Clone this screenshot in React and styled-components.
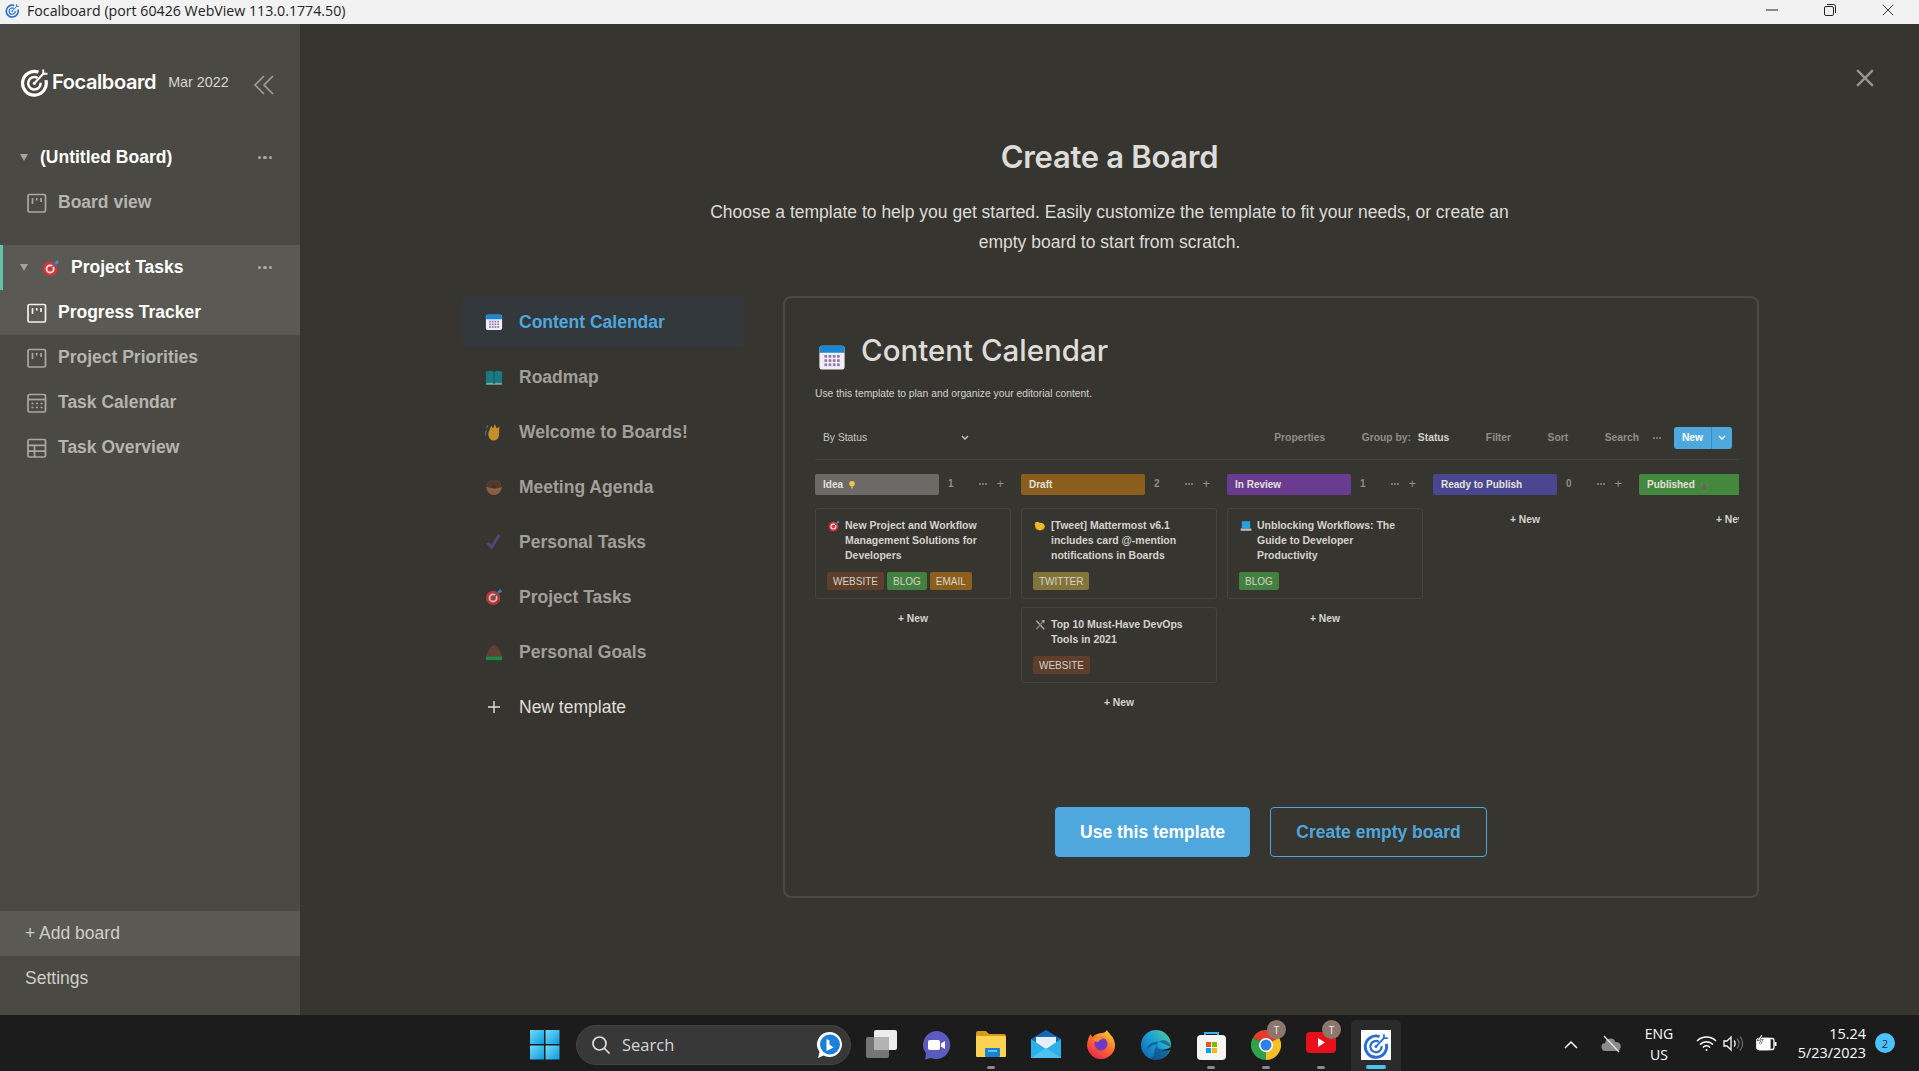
import styled, { createGlobalStyle } from 'styled-components'

const GlobalStyle = createGlobalStyle`
    html, body {
        margin: 0;
        padding: 0;
        background: #37352f;
        font-family: "Liberation Sans", Arial, sans-serif;
    }
    * { box-sizing: border-box; }
`

const Page = styled.div`
    width: 1919px;
    height: 1071px;
    display: flex;
    flex-direction: column;
    overflow: hidden;
`

/* window title bar */
const TitleBar = styled.div`
    height: 24px;
    flex: none;
    display: flex;
    align-items: center;
    background: #f2f2f2;
    padding: 0 0 4px 5px;
    color: #222;
    font-family: "Open Sans", sans-serif;
    font-size: 14.2px;
`
const TitleText = styled.span`
    margin-left: 7px;
    white-space: nowrap;
`
const WindowButtons = styled.div`
    margin-left: auto;
    display: flex;
    padding-right: 2px;
`
const WindowButton = styled.div`
    width: 58px;
    height: 20px;
    display: flex;
    align-items: center;
    justify-content: center;
`

const Body = styled.div`
    flex: 1;
    display: flex;
    min-height: 0;
`

/* sidebar */
const Sidebar = styled.aside`
    width: 300px;
    flex: none;
    display: flex;
    flex-direction: column;
    background: #4a4943;
    color: #fff;
`
const SideHeader = styled.div`
    height: 111px;
    flex: none;
    padding: 43px 0 0 20px;
    display: flex;
    align-items: flex-start;
`
const Logo = styled.div`
    height: 30px;
    display: flex;
    align-items: center;
`
const LogoText = styled.span`
    margin-left: 2px;
    font-family: Inter, sans-serif;
    font-size: 20px;
    font-weight: 600;
    letter-spacing: -0.4px;
`
const Version = styled.span`
    margin-left: 12px;
    font-size: 14.3px;
    color: #d8d7d3;
`
const Collapse = styled.div`
    margin-left: 24px;
    height: 30px;
    display: flex;
    align-items: center;
    padding-top: 5px;
`
const Group = styled.div`
    margin-bottom: 20px;
`
const SideRow = styled.div`
    height: 45px;
    display: flex;
    align-items: center;
    position: relative;
    padding-left: ${p => p.$indent}px;
    background: ${p => (p.$active ? '#5a5953' : 'transparent')};
    color: ${p => (p.$bright ? '#ffffff' : '#b5b4b0')};
    font-size: 17.5px;
    font-weight: 700;
`
const ActiveMark = styled.span`
    position: absolute;
    left: 0;
    top: 0;
    bottom: 0;
    width: 3px;
    background: #5fc4a8;
`
const Caret = styled.span`
    width: 0;
    height: 0;
    margin-right: 12px;
    border-left: 4.5px solid transparent;
    border-right: 4.5px solid transparent;
    border-top: 7px solid #a5a39e;
`
const RowIcon = styled.span`
    display: flex;
    margin-right: ${p => p.$gap || 11}px;
    margin-left: ${p => p.$left || 0}px;
`
const More = styled.span`
    position: absolute;
    right: 28px;
    top: 50%;
    margin-top: -2px;
    display: flex;
    gap: 2px;
    & i {
        width: 3.5px;
        height: 3.5px;
        border-radius: 50%;
        background: #aaa9a4;
    }
`
const SideFooter = styled.div`
    margin-top: auto;
    padding-bottom: 14px;
`
const FootRow = styled.div`
    height: 45px;
    display: flex;
    align-items: center;
    padding-left: 25px;
    font-size: 17.5px;
    color: #cfcec9;
    background: ${p => (p.$active ? '#5a5953' : 'transparent')};
`

/* dialog */
const Main = styled.main`
    flex: 1;
    position: relative;
    background: #37352f;
    padding-top: 113px;
`
const CloseX = styled.div`
    position: absolute;
    top: 45px;
    right: 45px;
    display: flex;
`
const Heading = styled.h1`
    margin: 0;
    height: 40px;
    line-height: 40px;
    text-align: center;
    font-family: Inter, sans-serif;
    font-size: 31px;
    font-weight: 600;
    color: #dddcd9;
    letter-spacing: -0.3px;
`
const Intro = styled.p`
    width: 830px;
    margin: 20px auto 0;
    text-align: center;
    font-size: 17.5px;
    line-height: 30px;
    color: #dddcd9;
`
const Content = styled.div`
    margin: 39px 0 0 162px;
    display: flex;
    align-items: flex-start;
    gap: 39px;
`
const TemplateList = styled.div`
    width: 282px;
    padding-top: 1px;
    display: flex;
    flex-direction: column;
    gap: 5px;
`
const TemplateRow = styled.div`
    height: 50px;
    display: flex;
    align-items: center;
    padding-left: 23px;
    border-radius: 4px;
    background: ${p => (p.$active ? '#32383b' : 'transparent')};
    color: ${p => (p.$active ? '#4fa8dd' : p.$plain ? '#e0dfdc' : '#a09f9b')};
    font-size: 17.5px;
    font-weight: ${p => (p.$plain ? 400 : 700)};
`
const TemplateIcon = styled.span`
    width: 34px;
    padding-left: ${p => p.$inset || 0}px;
    display: flex;
    align-items: center;
    opacity: ${p => (p.$dim ? 0.8 : 1)};
`

const Preview = styled.section`
    width: 976px;
    height: 602px;
    border: 2px solid #4a4943;
    border-radius: 8px;
    display: flex;
    flex-direction: column;
`
const Shot = styled.div`
    margin: 0 18px 0 30px;
    overflow: hidden;
`
const ShotHead = styled.div`
    height: 36px;
    margin-top: 34px;
    display: flex;
    align-items: center;
`
const ShotIcon = styled.span`
    display: flex;
    margin: 13px 15px 0 3px;
`
const ShotTitle = styled.h2`
    margin: 0;
    font-family: Inter, sans-serif;
    font-size: 29.5px;
    line-height: 36px;
    font-weight: 500;
    color: #dddcd9;
`
const ShotDesc = styled.p`
    margin: 19px 0 0;
    font-size: 10.3px;
    line-height: 14px;
    color: #d4d3cf;
`
const Toolbar = styled.div`
    height: 44px;
    margin-top: 15px;
    padding: 0 7px 0 8px;
    display: flex;
    align-items: center;
    border-bottom: 1px solid #43423c;
    font-size: 10.3px;
    color: #8f8e89;
`
const ViewSelect = styled.div`
    width: 146px;
    display: flex;
    align-items: center;
    justify-content: space-between;
    color: #c9c8c4;
`
const Tools = styled.div`
    margin-left: auto;
    display: flex;
    align-items: center;
    gap: 36.5px;
    font-weight: 700;
`
const GroupBy = styled.span`
    & b { margin-left: 7px; color: #d4d3cf; }
`
const SearchTools = styled.div`
    display: flex;
    align-items: center;
    gap: 13.5px;
`
const MiniDots = styled.span`
    display: flex;
    gap: 1px;
    & i {
        width: 2px;
        height: 2px;
        border-radius: 50%;
        background: ${p => p.$color || '#8f8e89'};
    }
`
const NewButton = styled.div`
    width: 58px;
    height: 22px;
    display: flex;
    border-radius: 3px;
    overflow: hidden;
    background: #4fa8dd;
    color: #fff;
    font-weight: 700;
    & span {
        flex: 1;
        display: flex;
        align-items: center;
        justify-content: center;
    }
    & span + span {
        flex: 0 0 21px;
        border-left: 1px solid #3a8dc0;
    }
`
const Columns = styled.div`
    margin-top: 14px;
    display: flex;
    gap: 10px;
    width: 1100px;
`
const Column = styled.div`
    width: 196px;
    flex: none;
    display: flex;
    flex-direction: column;
`
const ColumnHead = styled.div`
    height: 21px;
    margin-bottom: 13px;
    display: flex;
    align-items: center;
    color: #8f8e89;
    font-size: 10px;
    padding-right: 7px;
`
const ColumnLabel = styled.span`
    width: 124px;
    height: 21px;
    padding-left: 8px;
    display: flex;
    align-items: center;
    gap: 4px;
    border-radius: 2px;
    background: ${p => p.$color};
    color: #e2e1dd;
    font-weight: 700;
    white-space: nowrap;
`
const Count = styled.span`
    margin-left: 9px;
    margin-top: -3px;
    font-weight: 700;
`
const ColumnActions = styled.span`
    margin-left: auto;
    display: flex;
    align-items: center;
    gap: 9px;
    font-size: 13px;
    margin-top: -2px;
`
const CardStack = styled.div`
    display: flex;
    flex-direction: column;
    gap: 8px;
`
const Card = styled.div`
    border: 1px solid #45443e;
    border-radius: 3px;
    padding: 9px 11px 8px;
`
const CardTitle = styled.div`
    display: flex;
    align-items: flex-start;
    font-size: 10.5px;
    line-height: 15px;
    font-weight: 700;
    color: #d4d3cf;
`
const CardEmoji = styled.span`
    width: 18px;
    flex: none;
    padding-left: 1px;
    padding-top: 2px;
    display: flex;
`
const Tags = styled.div`
    margin-top: 9px;
    display: flex;
    gap: 3px;
`
const Tag = styled.span`
    height: 18px;
    padding: 0 6px;
    display: flex;
    align-items: center;
    border-radius: 2px;
    font-size: 10px;
    color: #d6d2c9;
    background: ${p => p.$color};
`
const AddCard = styled.div`
    height: 22px;
    margin-top: ${p => (p.$empty ? 0 : 8)}px;
    padding-right: ${p => (p.$empty ? 12 : 0)}px;
    display: flex;
    align-items: center;
    justify-content: center;
    font-size: 10.3px;
    font-weight: 700;
    color: #d4d3cf;
`
const Actions = styled.div`
    margin-top: auto;
    padding-bottom: 39px;
    display: flex;
    justify-content: center;
    gap: 20px;
`
const ActionButton = styled.button`
    height: 50px;
    width: ${p => p.$width}px;
    padding: 0;
    border-radius: 4px;
    border: 1px solid #4fa8dd;
    background: ${p => (p.$primary ? '#4fa8dd' : 'transparent')};
    color: ${p => (p.$primary ? '#fff' : '#4fa8dd')};
    font-family: "Liberation Sans", Arial, sans-serif;
    font-size: 17.5px;
    font-weight: 700;
`

/* taskbar */
const Taskbar = styled.footer`
    height: 56px;
    flex: none;
    display: flex;
    align-items: center;
    padding-left: 530px;
    background: #1c1c1c;
    color: #fff;
    font-family: "Open Sans", sans-serif;
`
const StartButton = styled.div`
    width: 30px;
    margin: 3px 16px 0 0;
    display: flex;
`
const SearchPill = styled.div`
    width: 275px;
    height: 40px;
    margin: 3px 5px 0 0;
    padding: 0 7px 0 14px;
    display: flex;
    align-items: center;
    border-radius: 20px;
    border: 1px solid #444;
    background: #383838;
    color: #d6d6d6;
    font-size: 16.5px;
`
const SearchLabel = styled.span`
    margin-left: 11px;
    flex: 1;
`
const Slots = styled.div`
    align-self: flex-end;
    display: flex;
    gap: 5px;
`
const Slot = styled.div`
    width: 50px;
    height: 51px;
    position: relative;
    display: flex;
    justify-content: center;
    padding-top: 10px;
    border-radius: 5px 5px 0 0;
    background: ${p => (p.$current ? '#2b2b2b' : 'transparent')};
`
const RunDot = styled.span`
    position: absolute;
    left: 50%;
    bottom: 2px;
    width: ${p => (p.$current ? 20 : 8)}px;
    height: ${p => (p.$current ? 4 : 3)}px;
    margin-left: ${p => (p.$current ? -10 : -4)}px;
    border-radius: 2px;
    background: ${p => (p.$current ? '#4cc2ff' : '#8a8a8a')};
`
const UserBadge = styled.span`
    position: absolute;
    top: 0;
    right: 5px;
    width: 19px;
    height: 19px;
    border-radius: 50%;
    display: flex;
    align-items: center;
    justify-content: center;
    background: #8d776c;
    font-size: 10px;
    color: #f2eeee;
`
const Tray = styled.div`
    margin-left: auto;
    padding-right: 24px;
    display: flex;
    align-items: center;
`
const TrayItem = styled.div`
    width: ${p => p.$width}px;
    margin-right: ${p => p.$after || 0}px;
    margin-top: ${p => p.$drop || 0}px;
    display: flex;
    justify-content: center;
    text-align: center;
    font-size: 14px;
    line-height: 20.5px;
`
const Clock = styled.div`
    width: 81px;
    margin-right: 9px;
    text-align: right;
    font-size: 14.4px;
    line-height: 19.5px;
    white-space: nowrap;
`
const NoticeBadge = styled.div`
    width: 20px;
    height: 20px;
    border-radius: 50%;
    display: flex;
    align-items: center;
    justify-content: center;
    background: #4cc2ff;
    color: #10303f;
    font-size: 11px;
`

const FocalMark = ({ size = 30, color = '#fff' }) => (
    <svg width={size} height={size} viewBox="0 0 24 24" fill="none" stroke={color}>
        <path d="M14.750 4.070A9.500 9.500 0 1 0 20.700 10.500" strokeWidth="2.600" />
        <path d="M14 8.670A5 5 0 1 0 16.500 12.600" strokeWidth="2" />
        <path d="M11.500 13 19 5" strokeWidth="1.600" />
        <path d="M18.600 5.400V2M18.600 5.400H22" strokeWidth="1.500" />
        <circle cx="11.500" cy="13" r="1.300" fill={color} stroke="none" />
    </svg>
)

const SmallX = ({ size, color, sw }) => (
    <svg width={size} height={size} viewBox="0 0 16 16" stroke={color} strokeWidth={sw}>
        <path d="M1 1l14 14M15 1L1 15" />
    </svg>
)

const BoardIcon = ({ color }) => (
    <svg width="20" height="20" viewBox="0 0 20 20" fill="none" stroke={color} strokeWidth="1.700">
        <rect x="1" y="1.500" width="17.500" height="17.500" rx="1.500" />
        <path d="M5.500 5v6M9.700 5v2.500M14 5v4" />
    </svg>
)
const CalendarIcon = ({ color }) => (
    <svg width="20" height="20" viewBox="0 0 20 20" fill="none" stroke={color} strokeWidth="1.700">
        <rect x="1" y="1.500" width="17.500" height="17.500" rx="1.500" />
        <path d="M1 6.500h17.500" />
        <path d="M4.500 10.500h2M9 10.500h2M13.500 10.500h2M4.500 14.500h2M9 14.500h2M13.500 14.500h2" strokeWidth="1.500" />
    </svg>
)
const TableIcon = ({ color }) => (
    <svg width="20" height="20" viewBox="0 0 20 20" fill="none" stroke={color} strokeWidth="1.700">
        <rect x="1" y="1.500" width="17.500" height="17.500" rx="1.500" />
        <path d="M1 7.300h17.500M1 13.100h17.500M7.500 7.300V19" />
    </svg>
)
const sideIcons = { board: BoardIcon, calendar: CalendarIcon, table: TableIcon }

const Emoji = ({ name, size = 18 }) => {
    const parts = {
        calendar: (
            <>
                <rect x="1" y="2" width="18" height="17" rx="2" fill="#f1eef8" />
                <path d="M1 7V4a2 2 0 0 1 2-2h14a2 2 0 0 1 2 2v3z" fill="#1a86d4" />
                {[5.5, 8.5, 11.5, 14.5].map(x => [9.5, 12.5, 15.5].map(y => (
                    <rect key={`${x}-${y}`} x={x - 0.9} y={y - 0.9} width="1.900" height="1.900" fill="#8a78a8" />
                )))}
            </>
        ),
        map: (
            <>
                <path d="M1 4l6-1 3 1.500 3-1.500 6 1v13l-6-1-3 1.500-3-1.500-6 1z" fill="#138a96" />
                <path d="M1 17l6-1 3 1.500 3-1.500 6 1v1.500H1z" fill="#7fc9d3" />
                <path d="M10 4.500V17" stroke="#0c5a64" strokeWidth="1" />
            </>
        ),
        wave: (
            <>
                <path d="M4 10l3-7 2 3 2-5 2 5 3-2-.5 10c-.5 4-3.500 6-6.500 5.500-4-.6-6-5-5-9.500z" fill="#e8a52c" />
                <path d="M1.500 8c-1 2-1 4-.5 6M3.500 2.500C2.500 3.500 2 4.500 1.800 6" stroke="#5d7fa5" strokeWidth="1.200" fill="none" />
            </>
        ),
        donut: (
            <>
                <circle cx="10" cy="10.500" r="8.500" fill="#a06a4a" />
                <path d="M2 10a8 8 0 0 1 16 0c-1 1-2 0-3 1s-2 0-3 .5-2 0-3-.5-2 .5-3 0-3 0-4-1z" fill="#5b3a2a" />
                <circle cx="10" cy="9.500" r="2.200" fill="#37352f" />
            </>
        ),
        check: <path d="M3 11l4 5L16 2" fill="none" stroke="#5b4b8a" strokeWidth="3.400" />,
        target: (
            <>
                <circle cx="9" cy="11" r="8" fill="#d8333d" />
                <circle cx="9" cy="11" r="5" fill="#f3e4e0" />
                <circle cx="9" cy="11" r="3" fill="#d8333d" />
                <path d="M9 11l7-7" stroke="#5a6a78" strokeWidth="1.500" />
                <path d="M14 4l3-3 2 3-3 2z" fill="#3d93c9" />
            </>
        ),
        goal: (
            <>
                <path d="M1 15C3 8 7 2.500 10 2.500S17 8 19 15z" fill="#6c4435" />
                <rect x="1" y="15" width="18" height="4" fill="#1e9a50" />
            </>
        ),
        bulb: (
            <>
                <circle cx="10" cy="7.500" r="5.500" fill="#f4c542" />
                <rect x="8" y="13" width="4" height="4" fill="#b7a988" />
            </>
        ),
        chick: (
            <>
                <ellipse cx="10" cy="11" rx="8" ry="6.500" fill="#f0b62c" />
                <circle cx="5.500" cy="7" r="4" fill="#f0b62c" />
                <path d="M2 7L0 8l2 1z" fill="#cc7a1a" />
            </>
        ),
        tools: (
            <>
                <path d="M4 3l13 14" stroke="#a8a8a8" strokeWidth="2.500" />
                <path d="M16 3L4 17" stroke="#8a7a6a" strokeWidth="2.500" />
                <path d="M12 2h6l-1 5z" fill="#b8b8b8" />
            </>
        ),
        laptop: (
            <>
                <rect x="3" y="2" width="14" height="12" fill="#27a0e0" />
                <rect x="1" y="14" width="18" height="4" rx="1" fill="#b9bfc6" />
            </>
        ),
        party: (
            <>
                <path d="M7 18l3-13 4 13z" fill="#8a4f55" />
                <path d="M14 5l2-2M4 6l2 2M16 10l2 1" stroke="#4aa6a0" strokeWidth="1.500" />
            </>
        ),
    }
    return <svg width={size} height={size} viewBox="0 0 20 20">{parts[name]}</svg>
}

const Dots = () => <More><i /><i /><i /></More>

const WinLogo = () => (
    <svg width="30" height="30" viewBox="0 0 30 30">
        <defs>
            <linearGradient id="win" x1="0" y1="0" x2="1" y2="1">
                <stop offset="0" stopColor="#6fdcf8" />
                <stop offset="1" stopColor="#0f9ae0" />
            </linearGradient>
        </defs>
        <rect x="0" y="0" width="14" height="14" fill="url(#win)" />
        <rect x="15.500" y="0" width="14" height="14" fill="url(#win)" />
        <rect x="0" y="15.500" width="14" height="14" fill="url(#win)" />
        <rect x="15.500" y="15.500" width="14" height="14" fill="url(#win)" />
    </svg>
)
const BingIcon = () => (
    <svg width="27" height="28" viewBox="0 0 27 28">
        <path d="M13.500 1a12.500 12.500 0 1 1-6 23.500L2 27l1.500-6A12.500 12.500 0 0 1 13.500 1z" fill="#fff" />
        <circle cx="14" cy="13.500" r="10" fill="#1b7fdc" />
        <path d="M10.500 5v15l7-3.500-4-3v-4l-3-1.500z" fill="#fff" />
    </svg>
)
const TaskViewIcon = () => (
    <svg width="31" height="29" viewBox="0 0 31 29">
        <rect x="8" y="0" width="23" height="20" rx="2" fill="#ececec" />
        <rect x="0" y="7" width="23" height="21" rx="2" fill="#757575" />
        <rect x="8" y="7" width="15" height="13" fill="#b3b3b3" />
    </svg>
)
const TeamsIcon = () => (
    <svg width="30" height="30" viewBox="0 0 30 30">
        <path d="M15 1a14 14 0 1 1-5 27l-6 1.500 1-6A14 14 0 0 1 15 1z" fill="#5b5bc0" />
        <rect x="7" y="10" width="12" height="10" rx="2" fill="#fff" />
        <path d="M20 13.500l4-2.500v8l-4-2.500z" fill="#fff" />
    </svg>
)
const FolderIcon = () => (
    <svg width="30" height="28" viewBox="0 0 30 28">
        <path d="M0 3a2 2 0 0 1 2-2h8l3 3h15a2 2 0 0 1 2 2v3H0z" fill="#d39b1a" />
        <path d="M0 6h28a2 2 0 0 1 2 2v18a1 1 0 0 1-1 1H1a1 1 0 0 1-1-1z" fill="#fbd251" />
        <rect x="9" y="18" width="15" height="9" rx="1" fill="#1a83d0" />
        <rect x="12" y="20" width="9" height="2" fill="#5cc0f0" />
    </svg>
)
const MailIcon = () => (
    <svg width="30" height="28" viewBox="0 0 30 28">
        <path d="M0 9L15 0l15 9v19H0z" fill="#0f6cbd" />
        <path d="M5 7h20v8l-10 6-10-6z" fill="#e8eef5" />
        <path d="M0 9l15 10L30 9v19H0z" fill="#2bb0ec" />
        <path d="M0 28l15-10 15 10z" fill="#4cc2f0" />
    </svg>
)
const FirefoxIcon = () => (
    <svg width="29" height="30" viewBox="0 0 29 30">
        <defs>
            <linearGradient id="ff" x1="0.800" y1="0" x2="0.200" y2="1">
                <stop offset="0" stopColor="#ffd22e" />
                <stop offset="0.500" stopColor="#ff6a2e" />
                <stop offset="1" stopColor="#e4234f" />
            </linearGradient>
        </defs>
        <path d="M20 0c1 3 7 6 8 14a14 14 0 1 1-27-4c.5-2 1-4 3-6 0 2 1 3 2 3 2-3 6-4 9-4 2 0 4-1 5-3z" fill="url(#ff)" />
        <circle cx="14" cy="14" r="6.500" fill="#6d3bc4" />
        <path d="M6 9c3-2 8-2 11 0-3 0-5 1-6 3-2 0-4-1-5-3z" fill="#ff8a2e" />
    </svg>
)
const EdgeIcon = () => (
    <svg width="30" height="30" viewBox="0 0 30 30">
        <defs>
            <linearGradient id="edge" x1="0" y1="1" x2="1" y2="0">
                <stop offset="0" stopColor="#0b5fa8" />
                <stop offset="0.550" stopColor="#1ba0d8" />
                <stop offset="1" stopColor="#58d68a" />
            </linearGradient>
        </defs>
        <circle cx="15" cy="15" r="15" fill="url(#edge)" />
        <path d="M30 17c-1-6-7-8-11-6-3 1-4 5-2 7 3 3 8 2 12 1-2 6-7 11-13 11-3 0-5-1-7-3 6 2 2-8 8-12-4-1-9 1-11 5 1-8 9-9 13-8" fill="#0d3a70" opacity="0.550" />
        <path d="M17 18c3 3 8 2 13-1 0 1 0 2-1 3-4 1-9 1-12-2z" fill="#1c1c1c" />
    </svg>
)
const StoreIcon = () => (
    <svg width="29" height="30" viewBox="0 0 29 30">
        <path d="M8 7V3h13v4" fill="none" stroke="#35b6f0" strokeWidth="2" />
        <rect x="0" y="5" width="29" height="25" rx="4" fill="#f5f5f5" />
        <rect x="9" y="12" width="5" height="5" fill="#f25022" />
        <rect x="15" y="12" width="5" height="5" fill="#7fba00" />
        <rect x="9" y="18" width="5" height="5" fill="#00a4ef" />
        <rect x="15" y="18" width="5" height="5" fill="#ffb900" />
    </svg>
)
const ChromeIcon = () => (
    <svg width="30" height="30" viewBox="0 0 30 30">
        <path d="M15 15L2 7.500A15 15 0 0 1 28 7.500z" fill="#e33b2e" />
        <path d="M15 15L28 7.500A15 15 0 0 1 15 30z" fill="#f6bf26" />
        <path d="M15 15V30A15 15 0 0 1 2 7.500z" fill="#2fa24a" />
        <circle cx="15" cy="15" r="7" fill="#fff" />
        <circle cx="15" cy="15" r="5.500" fill="#2f7fe8" />
    </svg>
)
const YoutubeIcon = () => (
    <svg width="30" height="24" viewBox="0 0 30 24">
        <rect x="0" y="2" width="30" height="21" rx="4" fill="#e8101a" />
        <path d="M12 8l7 4.500-7 4.500z" fill="#fff" />
    </svg>
)
const FocalTile = styled.span`
    width: 30px;
    height: 30px;
    display: flex;
    align-items: center;
    justify-content: center;
    background: #fff;
`

const CloudOff = () => (
    <svg width="21" height="18" viewBox="0 0 21 18">
        <path d="M5 16a4 4 0 0 1-1-8 5.500 5.500 0 0 1 10.500-1A4.500 4.500 0 0 1 16 16z" fill="#8a8a8a" />
        <path d="M3 1l15 16" stroke="#e8e8e8" strokeWidth="1.200" />
    </svg>
)
const Wifi = () => (
    <svg width="21" height="17" viewBox="0 0 21 17" fill="none" stroke="#fff" strokeWidth="1.500">
        <path d="M1 6a13.500 13.500 0 0 1 19 0M4 9.500a9 9 0 0 1 13 0M7 12.500a4.500 4.500 0 0 1 7 0" />
        <circle cx="10.500" cy="15" r="1" fill="#fff" stroke="none" />
    </svg>
)
const Speaker = () => (
    <svg width="21" height="17" viewBox="0 0 21 17" fill="none" stroke="#fff" strokeWidth="1.300">
        <path d="M1 6h3l4-4v13l-4-4H1z" />
        <path d="M11 5.500c1.500 1.500 1.500 4.500 0 6" />
        <path d="M14 3.500c2.500 3 2.500 7 0 10M17 1.500c3.500 4 3.500 10 0 14" stroke="#666" />
    </svg>
)
const Battery = () => (
    <svg width="21" height="16" viewBox="0 0 21 16" fill="none" stroke="#fff" strokeWidth="1.300">
        <rect x="1" y="3.500" width="17" height="11" rx="2" />
        <rect x="1" y="3.500" width="13" height="11" rx="2" fill="#fff" />
        <path d="M19.500 7v4" strokeWidth="2" />
        <path d="M6 0L2.500 5H6L4 9" stroke="#1c1c1c" strokeWidth="2" />
        <path d="M6 0L2.500 5H6L4 9" strokeWidth="1.100" />
    </svg>
)

const boards = [
    {
        name: '(Untitled Board)',
        views: [{ name: 'Board view', icon: 'board' }],
    },
    {
        name: 'Project Tasks',
        emoji: 'target',
        current: true,
        views: [
            { name: 'Progress Tracker', icon: 'board', current: true },
            { name: 'Project Priorities', icon: 'board' },
            { name: 'Task Calendar', icon: 'calendar' },
            { name: 'Task Overview', icon: 'table' },
        ],
    },
]

const templates = [
    { name: 'Content Calendar', emoji: 'calendar', active: true },
    { name: 'Roadmap', emoji: 'map' },
    { name: 'Welcome to Boards!', emoji: 'wave' },
    { name: 'Meeting Agenda', emoji: 'donut' },
    { name: 'Personal Tasks', emoji: 'check' },
    { name: 'Project Tasks', emoji: 'target' },
    { name: 'Personal Goals', emoji: 'goal' },
]

const tagColors = { WEBSITE: '#5d3f2b', BLOG: '#44803f', EMAIL: '#8d5f1e', TWITTER: '#82753c' }

const columns = [
    {
        label: 'Idea', emoji: 'bulb', color: '#6b6a66', count: 1,
        cards: [{ emoji: 'target', lines: 'New Project and Workflow Management Solutions for Developers', tags: ['WEBSITE', 'BLOG', 'EMAIL'] }],
    },
    {
        label: 'Draft', color: '#8a5f1d', count: 2,
        cards: [
            { emoji: 'chick', lines: '[Tweet] Mattermost v6.1 includes card @-mention notifications in Boards', tags: ['TWITTER'] },
            { emoji: 'tools', lines: 'Top 10 Must-Have DevOps Tools in 2021', tags: ['WEBSITE'] },
        ],
    },
    {
        label: 'In Review', color: '#6a3c8f', count: 1,
        cards: [{ emoji: 'laptop', lines: 'Unblocking Workflows: The Guide to Developer Productivity', tags: ['BLOG'] }],
    },
    { label: 'Ready to Publish', color: '#4a4790', count: 0, cards: [] },
    { label: 'Published', emoji: 'party', color: '#44873f', count: 0, cards: [] },
]

const apps = [
    { icon: <TaskViewIcon /> },
    { icon: <TeamsIcon /> },
    { icon: <FolderIcon />, running: true },
    { icon: <MailIcon /> },
    { icon: <FirefoxIcon /> },
    { icon: <EdgeIcon /> },
    { icon: <StoreIcon />, running: true },
    { icon: <ChromeIcon />, running: true, badge: 'T' },
    { icon: <YoutubeIcon />, running: true, badge: 'T' },
    { icon: <FocalTile><FocalMark size={27} color="#2a6fd0" /></FocalTile>, running: true, current: true },
]

const App = () => {
    return (
        <Page>
            <GlobalStyle />
            <TitleBar>
                <FocalMark size={15} color="#2a6fd0" />
                <TitleText>Focalboard (port 60426 WebView 113.0.1774.50)</TitleText>
                <WindowButtons>
                    <WindowButton>
                        <svg width="12" height="2"><path d="M0 1h12" stroke="#222" /></svg>
                    </WindowButton>
                    <WindowButton>
                        <svg width="12" height="12" viewBox="0 0 12 12" fill="none" stroke="#222">
                            <rect x="0.500" y="2.500" width="9" height="9" rx="1.500" />
                            <path d="M3 .5h6.500a2 2 0 0 1 2 2V9" />
                        </svg>
                    </WindowButton>
                    <WindowButton><SmallX size={12} color="#222" sw={1.2} /></WindowButton>
                </WindowButtons>
            </TitleBar>

            <Body>
                <Sidebar>
                    <SideHeader>
                        <Logo>
                            <FocalMark size={30} />
                            <LogoText>Focalboard</LogoText>
                            <Version>Mar 2022</Version>
                        </Logo>
                        <Collapse>
                            <svg width="21" height="20" viewBox="0 0 21 20" fill="none" stroke="#a5a39e" strokeWidth="1.500">
                                <path d="M11 1l-9 9 9 9M20 1l-9 9 9 9" />
                            </svg>
                        </Collapse>
                    </SideHeader>

                    {boards.map(board => (
                        <Group key={board.name}>
                            <SideRow $indent={20} $bright $active={board.current}>
                                {board.current && <ActiveMark />}
                                <Caret />
                                {board.emoji && (
                                    <RowIcon $left={2} $gap={11}><Emoji name={board.emoji} /></RowIcon>
                                )}
                                {board.name}
                                <Dots />
                            </SideRow>
                            {board.views.map(view => {
                                const Icon = sideIcons[view.icon]
                                return (
                                    <SideRow key={view.name} $indent={27} $active={view.current} $bright={view.current}>
                                        <RowIcon><Icon color={view.current ? '#f0f0ee' : '#a9a8a3'} /></RowIcon>
                                        {view.name}
                                    </SideRow>
                                )
                            })}
                        </Group>
                    ))}

                    <SideFooter>
                        <FootRow $active>+ Add board</FootRow>
                        <FootRow>Settings</FootRow>
                    </SideFooter>
                </Sidebar>

                <Main>
                    <CloseX><SmallX size={18} color="#97958f" sw={2} /></CloseX>
                    <Heading>Create a Board</Heading>
                    <Intro>
                        Choose a template to help you get started. Easily customize the template to fit your needs, or create an empty board to start from scratch.
                    </Intro>

                    <Content>
                        <TemplateList>
                            {templates.map(t => (
                                <TemplateRow key={t.name} $active={t.active}>
                                    <TemplateIcon $dim={!t.active}><Emoji name={t.emoji} /></TemplateIcon>
                                    {t.name}
                                </TemplateRow>
                            ))}
                            <TemplateRow $plain>
                                <TemplateIcon $inset={3}>
                                    <svg width="12" height="12" viewBox="0 0 12 12" stroke="#e0dfdc" strokeWidth="1.400">
                                        <path d="M6 0v12M0 6h12" />
                                    </svg>
                                </TemplateIcon>
                                New template
                            </TemplateRow>
                        </TemplateList>

                        <Preview>
                            <Shot>
                                <ShotHead>
                                    <ShotIcon><Emoji name="calendar" size={28} /></ShotIcon>
                                    <ShotTitle>Content Calendar</ShotTitle>
                                </ShotHead>
                                <ShotDesc>Use this template to plan and organize your editorial content.</ShotDesc>
                                <Toolbar>
                                    <ViewSelect>
                                        By Status
                                        <svg width="8" height="6" viewBox="0 0 8 6" fill="none" stroke="#c9c8c4" strokeWidth="1.400">
                                            <path d="M1 1l3 3 3-3" />
                                        </svg>
                                    </ViewSelect>
                                    <Tools>
                                        <span>Properties</span>
                                        <GroupBy>Group by:<b>Status</b></GroupBy>
                                        <span>Filter</span>
                                        <span>Sort</span>
                                        <SearchTools>
                                            <span>Search</span>
                                            <MiniDots><i /><i /><i /></MiniDots>
                                            <NewButton>
                                                <span>New</span>
                                                <span>
                                                    <svg width="8" height="6" viewBox="0 0 8 6" fill="none" stroke="#fff" strokeWidth="1.400">
                                                        <path d="M1 1l3 3 3-3" />
                                                    </svg>
                                                </span>
                                            </NewButton>
                                        </SearchTools>
                                    </Tools>
                                </Toolbar>
                                <Columns>
                                    {columns.map(col => (
                                        <Column key={col.label}>
                                            <ColumnHead>
                                                <ColumnLabel $color={col.color}>
                                                    {col.label}
                                                    {col.emoji && <Emoji name={col.emoji} size={10} />}
                                                </ColumnLabel>
                                                <Count>{col.count}</Count>
                                                <ColumnActions>
                                                    <MiniDots><i /><i /><i /></MiniDots>
                                                    <span>+</span>
                                                </ColumnActions>
                                            </ColumnHead>
                                            <CardStack>
                                                {col.cards.map(card => (
                                                    <Card key={card.lines}>
                                                        <CardTitle>
                                                            <CardEmoji><Emoji name={card.emoji} size={12} /></CardEmoji>
                                                            <span>{card.lines}</span>
                                                        </CardTitle>
                                                        <Tags>
                                                            {card.tags.map(tag => (
                                                                <Tag key={tag} $color={tagColors[tag]}>{tag}</Tag>
                                                            ))}
                                                        </Tags>
                                                    </Card>
                                                ))}
                                            </CardStack>
                                            <AddCard $empty={col.cards.length === 0}>+ New</AddCard>
                                        </Column>
                                    ))}
                                </Columns>
                            </Shot>
                            <Actions>
                                <ActionButton $primary $width={195}>Use this template</ActionButton>
                                <ActionButton $width={217}>Create empty board</ActionButton>
                            </Actions>
                        </Preview>
                    </Content>
                </Main>
            </Body>

            <Taskbar>
                <StartButton><WinLogo /></StartButton>
                <SearchPill>
                    <svg width="20" height="20" viewBox="0 0 20 20" fill="none" stroke="#e0e0e0" strokeWidth="1.700">
                        <circle cx="8.500" cy="8.500" r="6.500" />
                        <path d="M13 13l5.500 5.500" />
                    </svg>
                    <SearchLabel>Search</SearchLabel>
                    <BingIcon />
                </SearchPill>
                <Slots>
                    {apps.map((app, i) => (
                        <Slot key={i} $current={app.current}>
                            {app.icon}
                            {app.badge && <UserBadge>{app.badge}</UserBadge>}
                            {app.running && <RunDot $current={app.current} />}
                        </Slot>
                    ))}
                </Slots>
                <Tray>
                    <TrayItem $width={40} $drop={2}>
                        <svg width="14" height="9" viewBox="0 0 14 9" fill="none" stroke="#fff" strokeWidth="1.500">
                            <path d="M1 8l6-6 6 6" />
                        </svg>
                    </TrayItem>
                    <TrayItem $width={40} $drop={2}><CloudOff /></TrayItem>
                    <TrayItem $width={56} $after={6} $drop={3}>ENG<br />US</TrayItem>
                    <TrayItem $width={27}><Wifi /></TrayItem>
                    <TrayItem $width={27}><Speaker /></TrayItem>
                    <TrayItem $width={38}><Battery /></TrayItem>
                    <Clock>15.24<br />5/23/2023</Clock>
                    <NoticeBadge>2</NoticeBadge>
                </Tray>
            </Taskbar>
        </Page>
    )
}

export default App
